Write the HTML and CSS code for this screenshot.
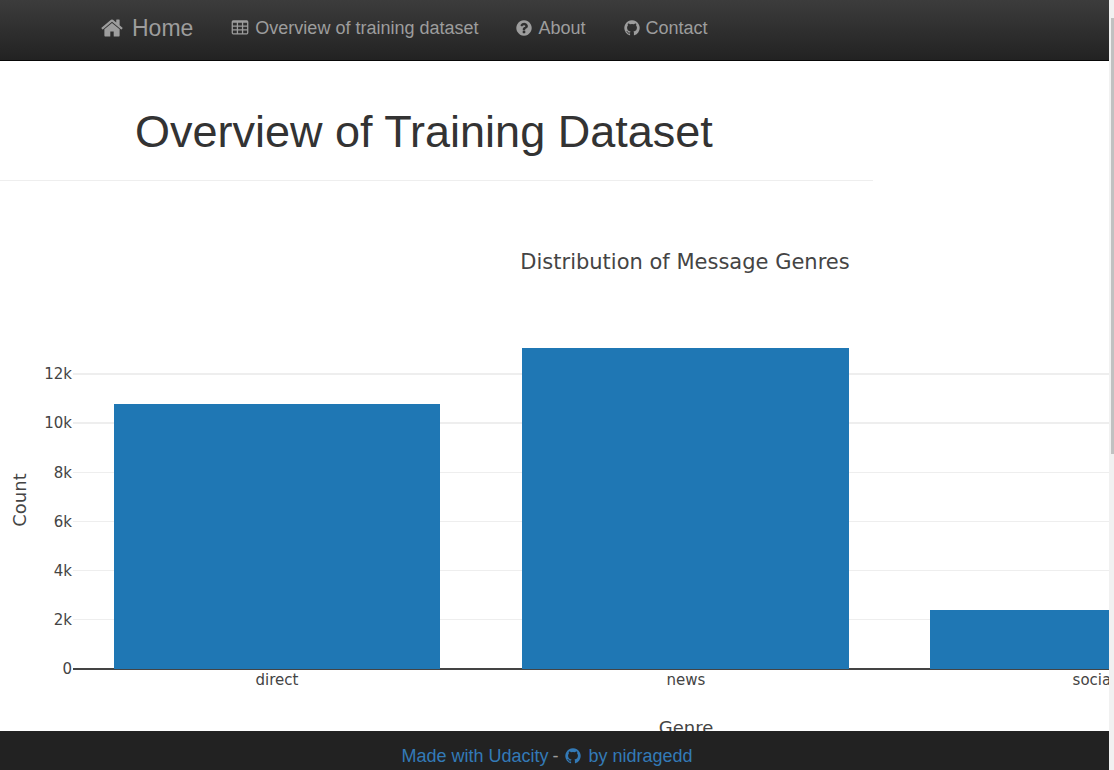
FILE: index.html
```html
<!DOCTYPE html>
<html lang="en">
<head>
<meta charset="utf-8">
<title>Overview of Training Dataset</title>
<link rel="stylesheet" href="styles.css">
</head>
<body>
<svg class="sprite" aria-hidden="true">
  <symbol id="home" viewBox="64 0 1664 1792"><path d="M1472 992v480q0 26-19 45t-45 19h-384v-384h-256v384h-384q-26 0-45-19t-19-45v-480q0-1 .5-3t.5-3l575-474 575 474q1 2 1 6zm223-69l-62 74q-8 9-21 11h-3q-13 0-21-7l-692-577-692 577q-12 8-24 7-13-2-21-11l-62-74q-8-10-7-23.5t11-21.5l719-599q32-26 76-26t76 26l244 204v-195q0-14 9-23t23-9h192q14 0 23 9t9 23v408l219 182q10 8 11 21.5t-7 23.5z"/></symbol>
  <symbol id="table" viewBox="64 0 1664 1792"><path fill-rule="evenodd" d="M224 128h1344q160 0 160 160v1088q0 160-160 160h-1344q-160 0-160-160v-1088q0-160 160-160zM192 384v256h384v-256zM704 384v256h384v-256zM1216 384v256h384v-256zM192 768v256h384v-256zM704 768v256h384v-256zM1216 768v256h384v-256zM192 1152v256h384v-256zM704 1152v256h384v-256zM1216 1152v256h384v-256z"/></symbol>
  <symbol id="question" viewBox="128 0 1536 1792"><path d="M1024 1376v-192q0-14-9-23t-23-9h-192q-14 0-23 9t-9 23v192q0 14 9 23t23 9h192q14 0 23-9t9-23zm256-672q0-88-55.5-163t-138.5-116-170-41q-243 0-371 213-15 24 8 42l132 100q7 6 19 6 16 0 25-12 53-68 86-92 34-24 86-24 48 0 85.5 26t37.5 59q0 38-20 61t-68 45q-63 28-115.5 86.5t-52.5 125.5v36q0 14 9 23t23 9h192q14 0 23-9t9-23q0-19 21.5-49.5t54.5-49.5q32-18 49-28.5t46-35 44.5-48 28-60.5 12.5-81zm384 192q0 209-103 385.5t-279.5 279.5-385.5 103-385.5-103-279.5-279.5-103-385.5 103-385.5 279.5-279.5 385.5-103 385.5 103 279.5 279.5 103 385.5z"/></symbol>
  <symbol id="github" viewBox="128 0 1536 1792"><path d="M896 128q209 0 385.5 103t279.5 279.5 103 385.5q0 251-146.5 451.5t-378.5 277.5q-27 5-40-7t-13-30q0-3 .5-76.5t.5-134.5q0-97-52-142 57-6 102.5-18t94-39 81-66.5 53-105 20.5-150.5q0-119-79-206 37-91-8-204-28-9-81 11t-92 44l-38 24q-93-26-192-26t-192 26q-16-11-42.5-27t-83.5-38.5-85-13.5q-45 113-8 204-79 87-79 206 0 85 20.5 150t52.5 105 80.5 67 94 39 102.5 18q-39 36-49 103-21 10-45 15t-57 5-65.5-21.5-55.5-62.5q-19-32-48.5-52t-49.5-24l-20-3q-21 0-29 4.5t-5 11.5 9 14 13 12l7 5q22 10 43.5 38t31.5 51l10 23q13 38 44 61.5t67 30 69.5 7 55.5-3.5l23-4q0 38 .5 88.5t.5 54.5q0 18-13 30t-40 7q-232-77-378.5-277.5t-146.5-451.5q0-209 103-385.5t279.5-279.5 385.5-103z"/></symbol>
</svg>
<div class="page">
  <nav class="navbar">
    <a class="brand" href="#"><svg class="icon icon-brand"><use href="#home"/></svg>Home</a>
    <a class="nav-link" href="#"><svg class="icon icon-table"><use href="#table"/></svg>Overview of training dataset</a>
    <a class="nav-link" href="#"><svg class="icon"><use href="#question"/></svg>About</a>
    <a class="nav-link" href="#"><svg class="icon"><use href="#github"/></svg>Contact</a>
  </nav>
  <main class="content">
    <header class="heading"><h1>Overview of Training Dataset</h1></header>
    <svg class="chart" width="1372" height="562" role="img" aria-label="Distribution of Message Genres">
      <text class="chart-title" x="685" y="68">Distribution of Message Genres</text>
      <g class="grid">
        <path class="thick" d="M73 173H1298M73 222H1298"/>
        <path d="M73 271.500H1298M73 320.500H1298M73 369.500H1298M73 418.500H1298"/>
      </g>
      <path class="axis" d="M73 468H1298"/>
      <g class="bars">
        <rect x="114" y="203" width="326" height="265"/>
        <rect x="522" y="147" width="327" height="321"/>
        <rect x="930" y="409" width="327" height="59"/>
      </g>
      <g class="ticks-y">
        <text x="72" y="178">12k</text>
        <text x="72" y="227">10k</text>
        <text x="72" y="277">8k</text>
        <text x="72" y="326">6k</text>
        <text x="72" y="375">4k</text>
        <text x="72" y="424">2k</text>
        <text x="72" y="473">0</text>
      </g>
      <g class="ticks-x">
        <text x="277" y="484">direct</text>
        <text x="686" y="484">news</text>
        <text x="1094" y="484">social</text>
      </g>
      <text class="axis-title" x="686" y="533">Genre</text>
      <text class="axis-title" transform="translate(26 299) rotate(-90)">Count</text>
    </svg>
  </main>
  <footer class="footer">
    <a href="#">Made with Udacity</a>
    <span>-</span>
    <a class="author" href="#"><svg class="icon"><use href="#github"/></svg>by nidragedd</a>
  </footer>
</div>
<div class="scroll-track"><div class="scroll-thumb"></div></div>
</body>
</html>
```
FILE: styles.css
```css
* { box-sizing: border-box; }

body {
  margin: 0;
  height: 100vh;
  display: flex;
  overflow: hidden;
  background: #fff;
  color: #333;
  font: 18px/24px "Liberation Sans", Arial, sans-serif;
}

a { text-decoration: none; }
.sprite { display: none; }

.page {
  flex: 1;
  min-width: 0;
  display: flex;
  flex-direction: column;
}

.navbar {
  flex: none;
  display: flex;
  align-items: flex-start;
  gap: 38px;
  padding: 16px 101px 20px;
  background: linear-gradient(#3c3c3c, #222);
  border-bottom: 1px solid #080808;
}

.brand, .nav-link {
  display: flex;
  align-items: center;
  gap: 6px;
  color: #9d9d9d;
  white-space: nowrap;
}

.brand { font-size: 23px; gap: 9px; }

.icon {
  flex: none;
  width: 16px;
  height: 18px;
  fill: currentColor;
}

.icon-brand { width: 22px; height: 24px; }
.icon-table { width: 18px; }

.content {
  flex: 1;
  min-height: 0;
  overflow: hidden;
}

.heading {
  max-width: 873px;
  margin-bottom: 20px;
  padding: 46px 0 24px 135px;
  border-bottom: 1px solid #eee;
}

h1 {
  margin: 0;
  font-size: 45px;
  font-weight: 400;
  line-height: 49px;
}

.chart {
  display: block;
  font-family: "DejaVu Sans", Verdana, sans-serif;
  font-size: 15px;
  fill: #444;
}

.chart-title { font-size: 21px; text-anchor: middle; }
.axis-title { font-size: 18px; text-anchor: middle; }
.ticks-y { text-anchor: end; }
.ticks-x { text-anchor: middle; }
.grid { stroke: #eee; stroke-width: 1px; }
.thick { stroke-width: 2px; }
.bars { fill: #1f77b4; }
.axis { stroke: #444; stroke-width: 2px; }

.footer {
  flex: none;
  display: flex;
  align-items: flex-start;
  justify-content: center;
  gap: 4px;
  height: 39px;
  padding: 13px 15px 0 0;
  background: #222;
  color: #9d9d9d;
}

.footer a { color: #337ab7; }
.footer .author { display: flex; align-items: center; gap: 7px; padding-left: 3px; }

.scroll-track {
  width: 5px;
  padding: 18px 0 0 2px;
  background: #f1f1f1;
}

.scroll-thumb { height: 58%; background: #c1c1c1; }
```
